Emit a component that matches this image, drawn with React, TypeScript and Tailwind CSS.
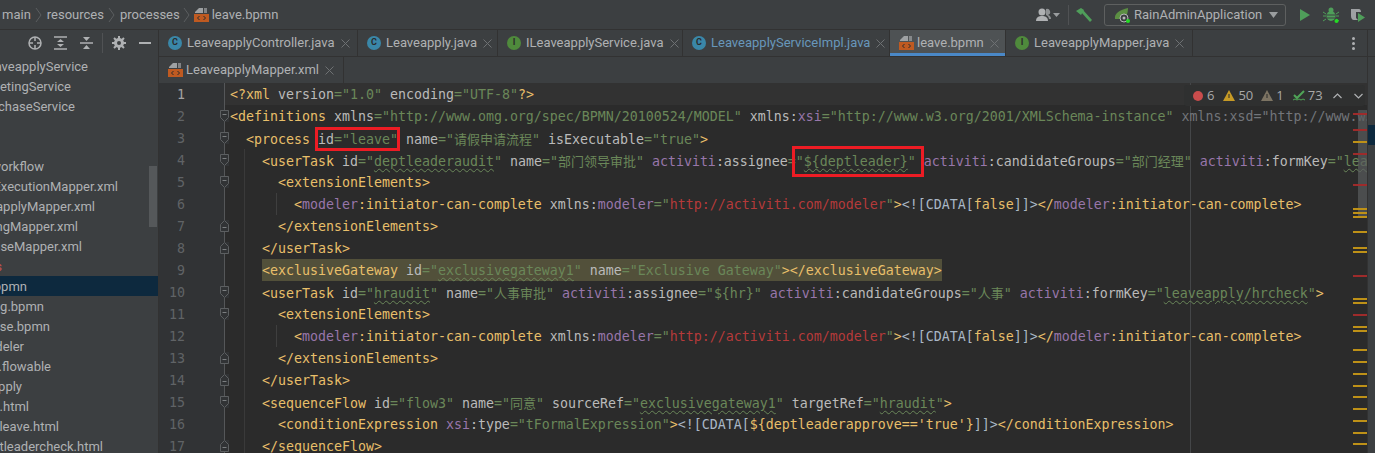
import React from 'react';

type Tok = [string, string];

const UI_FONT = "font-['Roboto','Noto_Sans',sans-serif]";

const col: Record<string, string> = {
  t: 'text-[#e8bf6a]',
  a: 'text-[#bababa]',
  p: 'text-[#9876aa]',
  s: 'text-[#6a8759]',
  w: 'text-[#6a8759] underline decoration-wavy decoration-[#6a8759] decoration-1 underline-offset-2',
  u: 'text-[#b53a3a]',
  d: 'text-[#72757a]',
  g: 'text-[#a9b7c6]',
};

const attr = (name: string, val: string, kind = 's'): Tok[] => [
  ['a', ` ${name}`],
  ['s', '="'],
  [kind, val],
  ['s', '"'],
];
const nsAttr = (ns: string, name: string, val: string, kind = 's'): Tok[] => [
  ['p', ` ${ns}`],
  ['a', `:${name}`],
  ['s', '="'],
  [kind, val],
  ['s', '"'],
];
const initiator: Tok[] = [
  ['t', '<'],
  ['p', 'modeler'],
  ['t', ':initiator-can-complete'],
  ['a', ' xmlns'],
  ['a', ':'],
  ['p', 'modeler'],
  ['s', '="'],
  ['u', 'http://activiti.com/modeler'],
  ['s', '"'],
  ['t', '>'],
  ['g', '<![CDATA['],
  ['t', 'false'],
  ['g', ']]>'],
  ['t', '</'],
  ['p', 'modeler'],
  ['t', ':initiator-can-complete>'],
];

const lines: { n: number; indent: string; fold?: 'down' | 'up'; toks: Tok[]; hl?: boolean }[] = [
  {
    n: 1,
    indent: '',
    toks: [['t', '<?xml'], ...attr('version', '1.0'), ...attr('encoding', 'UTF-8'), ['t', '?>']],
  },
  {
    n: 2,
    indent: '',
    fold: 'down',
    toks: [
      ['t', '<definitions'],
      ...attr('xmlns', 'http://www.omg.org/spec/BPMN/20100524/MODEL'),
      ['a', ' xmlns:'],
      ['p', 'xsi'],
      ['s', '="http://www.w3.org/2001/XMLSchema-instance"'],
      ['d', ' xmlns:xsd="http://www.w3.org/2001/XMLSchema"'],
    ],
  },
  {
    n: 3,
    indent: '  ',
    fold: 'down',
    toks: [['t', '<process'], ...attr('id', 'leave'), ...attr('name', '请假申请流程'), ...attr('isExecutable', 'true'), ['t', '>']],
  },
  {
    n: 4,
    indent: '    ',
    fold: 'down',
    toks: [
      ['t', '<userTask'],
      ...attr('id', 'deptleaderaudit', 'w'),
      ...attr('name', '部门领导审批'),
      ...nsAttr('activiti', 'assignee', '${deptleader}', 'w'),
      ...nsAttr('activiti', 'candidateGroups', '部门经理'),
      ...nsAttr('activiti', 'formKey', 'leaveapply/deptleadercheck', 'w'),
    ],
  },
  { n: 5, indent: '      ', fold: 'down', toks: [['t', '<extensionElements>']] },
  { n: 6, indent: '        ', toks: initiator },
  { n: 7, indent: '      ', fold: 'up', toks: [['t', '</extensionElements>']] },
  { n: 8, indent: '    ', fold: 'up', toks: [['t', '</userTask>']] },
  {
    n: 9,
    indent: '    ',
    hl: true,
    toks: [
      ['t', '<exclusiveGateway'],
      ...attr('id', 'exclusivegateway1', 'w'),
      ...attr('name', 'Exclusive Gateway'),
      ['t', '></exclusiveGateway>'],
    ],
  },
  {
    n: 10,
    indent: '    ',
    fold: 'down',
    toks: [
      ['t', '<userTask'],
      ...attr('id', 'hraudit', 'w'),
      ...attr('name', '人事审批'),
      ...nsAttr('activiti', 'assignee', '${hr}'),
      ...nsAttr('activiti', 'candidateGroups', '人事'),
      ...nsAttr('activiti', 'formKey', 'leaveapply/hrcheck', 'w'),
      ['t', '>'],
    ],
  },
  { n: 11, indent: '      ', fold: 'down', toks: [['t', '<extensionElements>']] },
  { n: 12, indent: '        ', toks: initiator },
  { n: 13, indent: '      ', fold: 'up', toks: [['t', '</extensionElements>']] },
  { n: 14, indent: '    ', fold: 'up', toks: [['t', '</userTask>']] },
  {
    n: 15,
    indent: '    ',
    fold: 'down',
    toks: [
      ['t', '<sequenceFlow'],
      ...attr('id', 'flow3'),
      ...attr('name', '同意'),
      ...attr('sourceRef', 'exclusivegateway1', 'w'),
      ...attr('targetRef', 'hraudit', 'w'),
      ['t', '>'],
    ],
  },
  {
    n: 16,
    indent: '      ',
    toks: [
      ['t', '<conditionExpression'],
      ['p', ' xsi'],
      ['a', ':type'],
      ['s', '="tFormalExpression"'],
      ['t', '>'],
      ['g', '<![CDATA['],
      ['t', "${deptleaderapprove=='true'}"],
      ['g', ']]>'],
      ['t', '</conditionExpression>'],
    ],
  },
  { n: 17, indent: '    ', fold: 'up', toks: [['t', '</sequenceFlow>']] },
];

const tree: { end: string; text: string; selected?: boolean; color?: string }[] = [
  { end: 'w-[88px]', text: 'LeaveapplyService' },
  { end: 'w-[71px]', text: 'MeetingService' },
  { end: 'w-[75px]', text: 'PurchaseService' },
  { end: 'w-[10px]', text: '' },
  { end: 'w-[10px]', text: '' },
  { end: 'w-[44px]', text: 'workflow' },
  { end: 'w-[118px]', text: 'ActExecutionMapper.xml' },
  { end: 'w-[95px]', text: 'LeaveapplyMapper.xml' },
  { end: 'w-[78px]', text: 'MeetingMapper.xml' },
  { end: 'w-[82px]', text: 'PurchaseMapper.xml' },
  { end: 'w-[2px]', text: 'processes', color: 'text-[#c75450]' },
  { end: 'w-[27px]', text: 'leave.bpmn', selected: true },
  { end: 'w-[44px]', text: 'meeting.bpmn' },
  { end: 'w-[50px]', text: 'purchase.bpmn' },
  { end: 'w-[24px]', text: 'modeler' },
  { end: 'w-[51px]', text: 'leave.flowable' },
  { end: 'w-[22px]', text: 'leaveapply' },
  { end: 'w-[29px]', text: 'add.html' },
  { end: 'w-[59px]', text: 'addleave.html' },
  { end: 'w-[103px]', text: 'deptleadercheck.html' },
];

const stripes: { top: string; color: string }[] = [
  { top: 'top-[30px]', color: 'bg-[#9e2b2b]' },
  { top: 'top-[46px]', color: 'bg-[#9e2b2b]' },
  { top: 'top-[58px]', color: 'bg-[#be9117]' },
  { top: 'top-[70px]', color: 'bg-[#9e2b2b]' },
  { top: 'top-[101px]', color: 'bg-[#9e2b2b]' },
  { top: 'top-[125px]', color: 'bg-[#be9117]' },
  { top: 'top-[129px]', color: 'bg-[#be9117]' },
  { top: 'top-[133px]', color: 'bg-[#be9117]' },
  { top: 'top-[148px]', color: 'bg-[#be9117]' },
  { top: 'top-[164px]', color: 'bg-[#be9117]' },
  { top: 'top-[168px]', color: 'bg-[#be9117]' },
  { top: 'top-[192px]', color: 'bg-[#9e2b2b]' },
  { top: 'top-[215px]', color: 'bg-[#be9117]' },
  { top: 'top-[219px]', color: 'bg-[#be9117]' },
  { top: 'top-[231px]', color: 'bg-[#9e2b2b]' },
  { top: 'top-[243px]', color: 'bg-[#be9117]' },
  { top: 'top-[247px]', color: 'bg-[#be9117]' },
  { top: 'top-[266px]', color: 'bg-[#be9117]' },
  { top: 'top-[278px]', color: 'bg-[#be9117]' },
  { top: 'top-[290px]', color: 'bg-[#be9117]' },
  { top: 'top-[302px]', color: 'bg-[#be9117]' },
  { top: 'top-[313px]', color: 'bg-[#be9117]' },
  { top: 'top-[325px]', color: 'bg-[#be9117]' },
  { top: 'top-[337px]', color: 'bg-[#be9117]' },
  { top: 'top-[349px]', color: 'bg-[#be9117]' },
  { top: 'top-[360px]', color: 'bg-[#be9117]' },
];

const BpmnIcon = () => (
  <svg width="15" height="16" viewBox="0 0 15 16" className="shrink-0 mr-[-2px]">
    <path d="M5 1h4v5H1V5z" fill="#9ea1a3" />
    <path d="M10 1h3v5h-3z" fill="#9ea1a3" opacity="0.7" />
    <rect x="0" y="7" width="15" height="8" fill="#bf5a21" />
    <path d="M5.500 9l-2 2 2 2M9.500 9l2 2-2 2" fill="none" stroke="#2b2b2b" strokeWidth="1" />
  </svg>
);

const Badge = ({ kind }: { kind: 'C' | 'I' }) => (
  <span
    className={`w-[14px] h-[14px] rounded-full shrink-0 flex items-center justify-center text-[9px] font-bold text-[#2b2b2b] ${
      kind === 'C' ? 'bg-[#3a87a8]' : 'bg-[#4f8a3c]'
    }`}
  >
    {kind}
  </span>
);

const Close = () => (
  <svg width="9" height="9" viewBox="0 0 9 9" className="shrink-0">
    <path d="M.5.5l8 8M8.500.5l-8 8" stroke="#6e7173" strokeWidth="1" />
  </svg>
);

const Tab = ({
  width,
  label,
  icon,
  active,
  modified,
}: {
  width: string;
  label: string;
  icon: React.ReactNode;
  active?: boolean;
  modified?: boolean;
}) => (
  <div
    className={`${width} h-full shrink-0 flex items-center pl-[9px] gap-[5px] border-r border-[#323232] relative ${
      active ? 'bg-[#4e5254]' : ''
    }`}
  >
    {icon}
    <span className={`text-[13px] whitespace-nowrap ${modified ? 'text-[#6897bb]' : 'text-[#afb1b3]'}`}>{label}</span>
    <span className="ml-[1px]">
      <Close />
    </span>
    {active && <div className="absolute left-0 right-0 bottom-0 h-[3px] bg-[#4a88c7]" />}
  </div>
);

const Crumb = () => (
  <svg width="8" height="16" viewBox="0 0 8 16" className="shrink-0">
    <path d="M1 1l5 7-5 7" fill="none" stroke="#5b5e60" strokeWidth="1" />
  </svg>
);

const Fold = ({ dir }: { dir: 'down' | 'up' }) => (
  <svg width="9" height="12" viewBox="0 0 9 12" className="absolute right-[-5px] top-[5px] bg-[#313335]">
    {dir === 'down' ? (
      <path d="M.5.5h8v7l-4 4-4-4z" fill="#313335" stroke="#5c5f61" />
    ) : (
      <path d="M.5 11.500h8v-7l-4-4-4 4z" fill="#313335" stroke="#5c5f61" />
    )}
    <path d={dir === 'down' ? 'M2.500 4.500h4' : 'M2.500 7.500h4'} stroke="#7b7e80" />
  </svg>
);

const Code = ({ tok }: { tok: Tok }) => {
  const cjk = /[\u4e00-\u9fff]/.test(tok[1]);
  return (
    <span className={`${col[tok[0]]} ${cjk ? "font-['Noto_Sans_CJK_SC',sans-serif] text-[13px]" : ''}`}>{tok[1]}</span>
  );
};

export default function App() {
  return (
    <div className={`w-[1375px] h-[453px] overflow-hidden flex flex-col bg-[#3c3f41] ${UI_FONT}`}>
      {/* nav bar */}
      <div className="h-[30px] shrink-0 flex items-center border-b border-[#323232] text-[13px] text-[#afb1b3] relative">
        <span className="ml-[2px]">main</span>
        <span className="mx-[4px]"><Crumb /></span>
        <span>resources</span>
        <span className="mx-[4px]"><Crumb /></span>
        <span>processes</span>
        <span className="ml-[3px] mr-[3px]"><Crumb /></span>
        <BpmnIcon />
        <span className="ml-[5px]">leave.bpmn</span>

        <div className="ml-auto flex items-center h-full">
          <svg width="26" height="16" viewBox="0 0 26 16">
            <circle cx="7" cy="5" r="3.500" fill="#afb1b3" />
            <path d="M1 14c0-4 3-5 6-5s6 1 6 5z" fill="#afb1b3" />
            <path d="M11 2a3 3 0 0 1 2 6c2 .5 3 2 3 4h-2c-.3-2-1-3-3-4z" fill="#8f9294" />
            <path d="M18 6h7l-3.500 4z" fill="#9a9d9f" />
          </svg>
          <div className="w-px h-[20px] bg-[#505254] ml-[7px] mr-[7px]" />
          <svg width="16" height="16" viewBox="0 0 16 16" className="mr-[12px]">
            <path d="M0 4l5-3 3 2-3 5z" fill="#4f9e5a" />
            <path d="M5 5l2-2 9 10-2 2z" fill="#4f9e5a" />
          </svg>
          <div className="w-[182px] h-[22px] rounded-[3px] border border-[#5e6060] flex items-center pl-[9px] mr-[13px]">
            <svg width="16" height="16" viewBox="0 0 16 16" className="mr-[4px] shrink-0">
              <path d="M1 12C0 6 6 3 14 1c0 6-2 11-8 11z" fill="#5c8f43" />
              <circle cx="10" cy="11" r="4" fill="#3c3f41" stroke="#b5b7b8" strokeWidth="1" />
              <circle cx="10" cy="11" r="1.500" fill="#b5b7b8" />
              <circle cx="14" cy="14" r="2" fill="#22dd22" />
            </svg>
            <span className="text-[#afb1b3] whitespace-nowrap w-[127px]">RainAdminApplication</span>
            <svg width="9" height="6" viewBox="0 0 9 6" className="ml-[8px] shrink-0">
              <path d="M0 0h9L4.500 6z" fill="#9a9d9f" />
            </svg>
          </div>
          <svg width="12" height="14" viewBox="0 0 12 14" className="mr-[12px]">
            <path d="M1 1l10 6-10 6z" fill="#4f9e5a" />
          </svg>
          <svg width="16" height="16" viewBox="0 0 16 16" className="mr-[11px]">
            <ellipse cx="8" cy="9" rx="4.500" ry="5" fill="#4f9e5a" />
            <circle cx="8" cy="3" r="2.500" fill="#4f9e5a" />
            <path d="M0 5l3 2M16 5l-3 2M0 9h3M16 9h-3M0 14l3-2M16 14l-3-2" stroke="#4f9e5a" />
            <path d="M4 8h8M4 11h8" stroke="#3c3f41" />
            <circle cx="13.500" cy="14" r="2" fill="#22dd22" />
          </svg>
          <svg width="16" height="16" viewBox="0 0 16 16" className="mr-[9px]">
            <path d="M1 2h7v3H6v6l2 2H4c-2 0-3-2-3-4z" fill="#9ea1a3" />
            <path d="M8 2h1c1 0 2 1 2 3H8z" fill="#9ea1a3" />
            <path d="M8 6l7 4.500-7 4.500z" fill="#4f9e5a" />
          </svg>
        </div>
      </div>

      <div className="flex-1 flex min-h-0">
        {/* project panel */}
        <div className="w-[158px] shrink-0 flex flex-col relative text-[13px] text-[#afb1b3]">
          <div className="h-[26px] shrink-0 flex items-center pl-[28px]">
            <svg width="14" height="14" viewBox="0 0 14 14" className="mr-[12px]">
              <circle cx="7" cy="7" r="6" fill="none" stroke="#afb1b3" strokeWidth="1.500" />
              <path d="M7 1v4M7 9v4M1 7h4M9 7h4" stroke="#afb1b3" strokeWidth="1.500" />
            </svg>
            <svg width="13" height="14" viewBox="0 0 13 14" className="mr-[13px]">
              <path d="M0 1h13M0 13h13" stroke="#afb1b3" strokeWidth="1.500" />
              <path d="M3 6l3.500-3L10 6zM3 8l3.500 3L10 8z" fill="#afb1b3" />
            </svg>
            <svg width="13" height="14" viewBox="0 0 13 14" className="mr-[9px]">
              <path d="M0 7h13" stroke="#afb1b3" strokeWidth="1.500" />
              <path d="M3 1l3.500 4L10 1zM3 13l3.500-4L10 13z" fill="#afb1b3" />
            </svg>
            <div className="w-px h-[20px] bg-[#505254] mr-[9px]" />
            <svg width="14" height="14" viewBox="0 0 14 14" className="mr-[13px]">
              <circle cx="7" cy="7" r="3.500" fill="none" stroke="#afb1b3" strokeWidth="3" />
              <path d="M7 0v3M7 11v3M0 7h3M11 7h3M2 2l2 2M10 10l2 2M12 2l-2 2M4 10l-2 2" stroke="#afb1b3" strokeWidth="2" />
            </svg>
            <div className="w-[12px] h-[2px] bg-[#afb1b3]" />
          </div>
          <div className="flex-1 overflow-hidden">
            {tree.map((row, i) => (
              <div key={i} className={`h-[20px] flex items-center ${row.selected ? 'bg-[#0d293e]' : ''}`}>
                <div className={`${row.end} shrink-0 flex justify-end`}>
                  <span className={`whitespace-nowrap relative top-[1px] ${row.color ?? ''}`}>{row.text}</span>
                </div>
              </div>
            ))}
          </div>
          <div className="absolute left-[149px] top-[136px] w-[8px] h-[61px] bg-[#55585a]" />
        </div>

        {/* editor */}
        <div className="flex-1 min-w-0 flex flex-col border-l border-[#323232]">
          <div className="h-[27px] shrink-0 flex border-b border-[#323232]">
            <Tab width="w-[199px]" label="LeaveapplyController.java" icon={<Badge kind="C" />} />
            <Tab width="w-[140px]" label="Leaveapply.java" icon={<Badge kind="C" />} />
            <Tab width="w-[185px]" label="ILeaveapplyService.java" icon={<Badge kind="I" />} />
            <Tab width="w-[207px]" label="LeaveapplyServiceImpl.java" icon={<Badge kind="C" />} modified />
            <Tab width="w-[116px]" label="leave.bpmn" icon={<BpmnIcon />} active />
            <Tab width="w-[187px]" label="LeaveapplyMapper.java" icon={<Badge kind="I" />} />
            <div className="flex-1 flex items-center justify-end pr-[12px]">
              <div className="flex flex-col gap-[2px]">
                <span className="w-[3px] h-[3px] rounded-full bg-[#afb1b3]" />
                <span className="w-[3px] h-[3px] rounded-full bg-[#afb1b3]" />
                <span className="w-[3px] h-[3px] rounded-full bg-[#afb1b3]" />
              </div>
            </div>
            <div className="w-[8px] border-l border-[#323232]" />
          </div>
          <div className="h-[26px] shrink-0 flex">
            <Tab width="w-[185px]" label="LeaveapplyMapper.xml" icon={<BpmnIcon />} />
            <div className="flex-1" />
            <div className="w-[8px] border-l border-[#323232]" />
          </div>

          <div className="flex-1 min-h-0 flex">
            <div className="flex-1 min-w-0 relative overflow-hidden bg-[#2b2b2b] font-['DejaVu_Sans_Mono',monospace] text-[13.29px]">
              <div className="absolute left-[1031px] top-0 bottom-0 w-px bg-[#444648]" />
              <div className="absolute left-[85px] top-[66px] bottom-0 w-px bg-[#3a3a3a]" />
              <div className="absolute left-[117px] top-[110px] h-[22px] w-px bg-[#3f3f3f]" />
              <div className="absolute left-[117px] top-[242px] h-[22px] w-px bg-[#3f3f3f]" />
              {lines.map((l) => (
                <div key={l.n} className={`h-[22px] flex leading-[22px] ${l.n === 1 ? 'bg-[#323232]' : ''}`}>
                  <div className={`w-[26px] shrink-0 text-right bg-[#313335] ${l.n === 1 ? 'text-[#a4a3a3]' : 'text-[#606366]'}`}>
                    <span className="relative top-[1px]">{l.n}</span>
                  </div>
                  <div className="w-[40px] shrink-0 bg-[#313335] border-r border-[#555759] relative">
                    {l.fold && <Fold dir={l.fold} />}
                  </div>
                  <div className="pl-[5px] whitespace-pre relative z-10">
                    <span>{l.indent}</span>
                    <span className={l.hl ? 'bg-[#52503a] inline-block h-[22px]' : ''}>
                      <span className="relative top-[1px]">
                        {l.toks.map((t, i) => (
                          <Code key={i} tok={t} />
                        ))}
                      </span>
                    </span>
                  </div>
                </div>
              ))}

              {/* red annotation boxes */}
              <div className="absolute z-20 left-[156px] top-[44px] w-[85px] h-[24px] border-[3px] border-[#ed1c24]" />
              <div className="absolute z-20 left-[633px] top-[63px] w-[132px] h-[31px] border-[3px] border-[#ed1c24]" />

              {/* inspection widget */}
              <div className="absolute z-30 left-[1025px] top-[2px] w-[181px] h-[21px] rounded-[3px] bg-[#2f3030] flex items-center pl-[9px] font-['Open_Sans',sans-serif] text-[13px] text-[#a9a9a9]">
                <span className="w-[10px] h-[10px] rounded-full bg-[#c94c4c] mr-[4px]" />
                <span>6</span>
                <svg width="12" height="11" viewBox="0 0 12 11" className="ml-[9px] mr-[3px]">
                  <path d="M6 0l6 11H0z" fill="#c69a26" />
                  <path d="M6 4v4" stroke="#2b2b2b" />
                </svg>
                <span>50</span>
                <svg width="12" height="11" viewBox="0 0 12 11" className="ml-[8px] mr-[3px]">
                  <path d="M6 0l6 11H0z" fill="#7d7463" />
                  <path d="M6 4v4" stroke="#2b2b2b" />
                </svg>
                <span>1</span>
                <svg width="12" height="12" viewBox="0 0 12 12" className="ml-[9px] mr-[3px]">
                  <path d="M1 5l3 3 7-7" fill="none" stroke="#4fa457" strokeWidth="2" />
                  <path d="M0 10l2-1 2 1 2-1 2 1 2-1 2 1" fill="none" stroke="#4fa457" />
                </svg>
                <span>73</span>
                <svg width="9" height="6" viewBox="0 0 9 6" className="ml-[10px]">
                  <path d="M.5 5l4-4 4 4" fill="none" stroke="#afb1b3" strokeWidth="1.200" />
                </svg>
                <svg width="9" height="6" viewBox="0 0 9 6" className="ml-[12px]">
                  <path d="M.5 1l4 4 4-4" fill="none" stroke="#afb1b3" strokeWidth="1.200" />
                </svg>
              </div>

              {/* error stripes */}
              <div className="absolute z-30 right-0 top-[27px] w-[9px] h-[107px] bg-[#5a5c5e]/70" />
              {stripes.map((s, i) => (
                <div key={i} className={`absolute z-30 right-0 w-[14px] h-[2px] ${s.top} ${s.color}`} />
              ))}
            </div>
            <div className="w-[8px] shrink-0 bg-[#3c3f41] border-l border-[#323232] relative">
              <div className="absolute left-0 right-0 top-[42px] h-[20px] bg-[#0d293e]" />
            </div>
          </div>
        </div>
      </div>
    </div>
  );
}
